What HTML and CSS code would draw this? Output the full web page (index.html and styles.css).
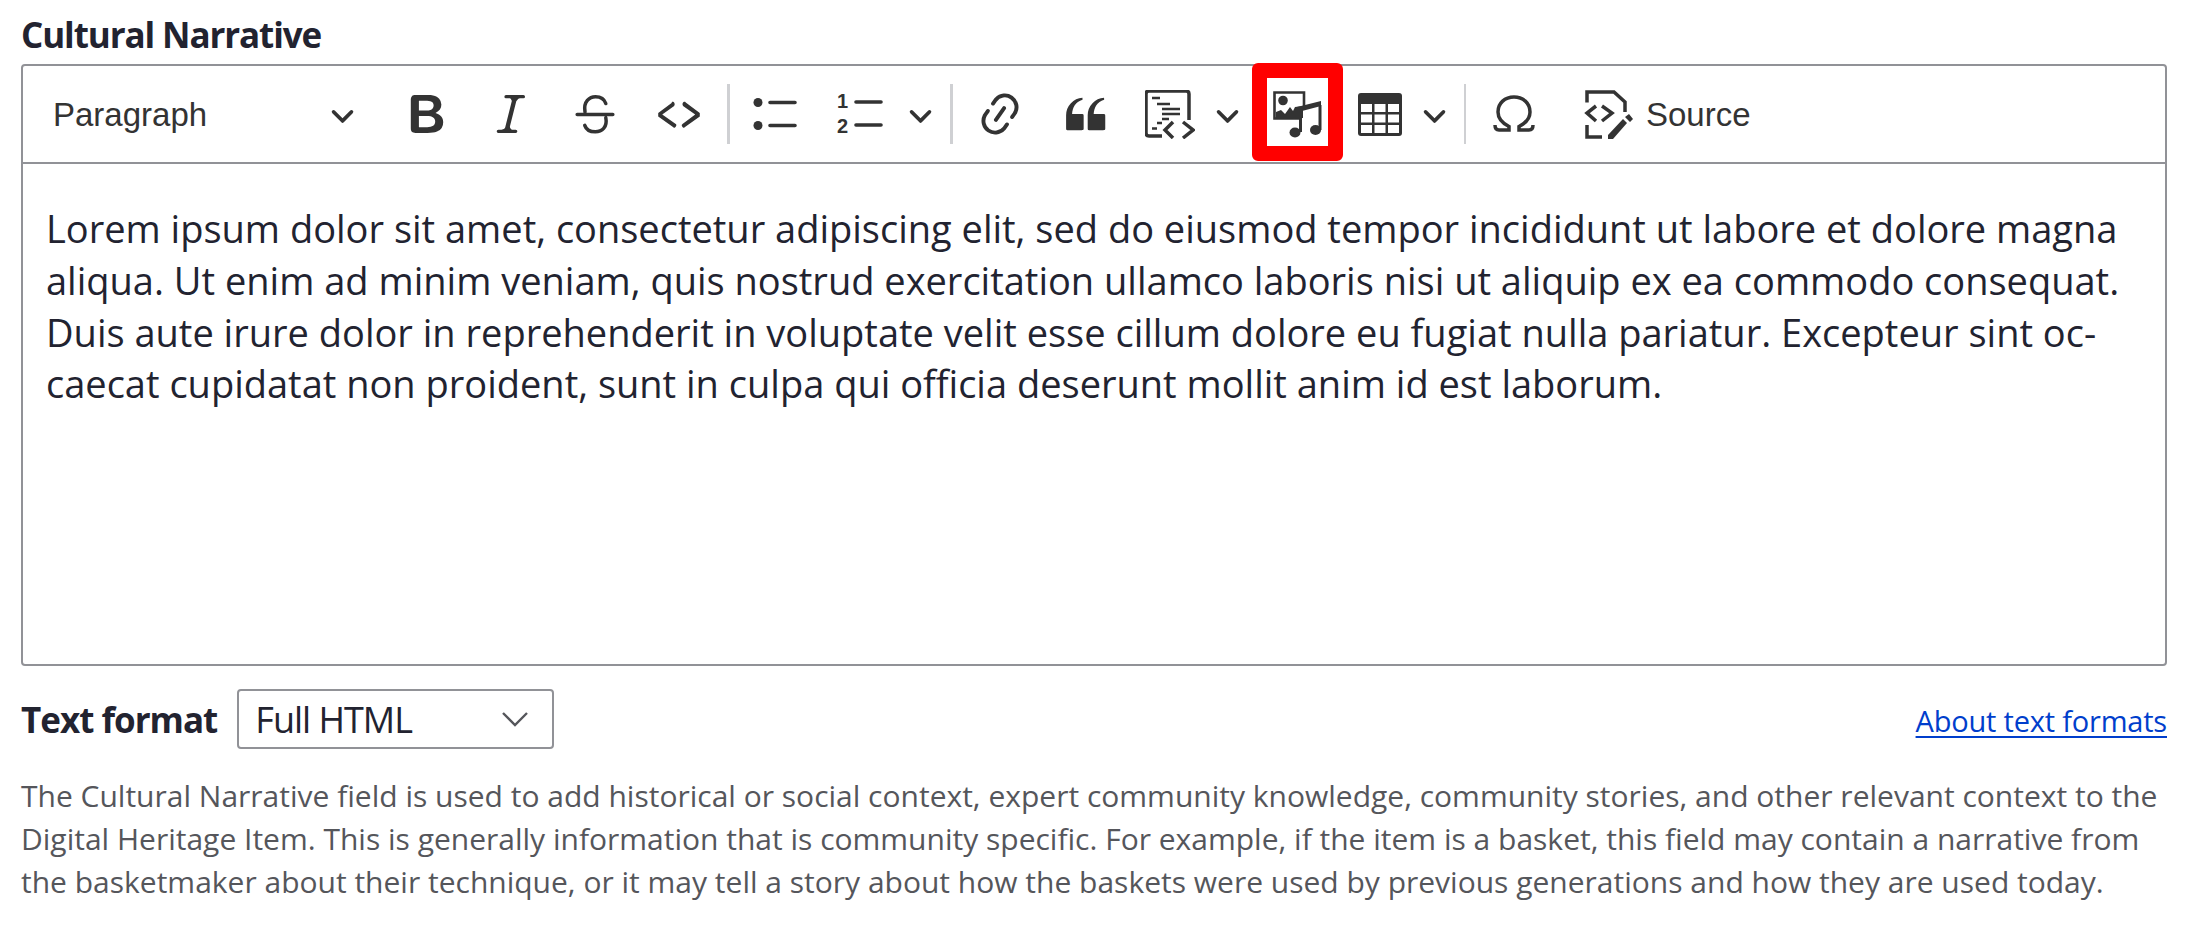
FILE: index.html
```html
<!DOCTYPE html>
<html lang="en">
<head>
<meta charset="utf-8">
<title>Cultural Narrative</title>
<link rel="stylesheet" href="styles.css">
</head>
<body>
<div class="field">
  <label class="field-label">Cultural Narrative</label>
  <div class="editor">
    <div class="toolbar">
      <div class="tool heading"><span class="tool-text">Paragraph</span>
        <svg class="chev" viewBox="0 0 10 10"><path d="M.941 4.523a.75.75 0 1 1 1.06-1.06l3.006 3.005 3.005-3.005a.75.75 0 1 1 1.06 1.06l-3.549 3.55a.75.75 0 0 1-1.168-.136L.941 4.523z"/></svg>
      </div>
      <div class="tool std"><svg class="ico" viewBox="0 0 20 20"><path d="M10.187 17H5.773c-.637 0-1.092-.138-1.364-.415-.273-.277-.409-.718-.409-1.323V4.738c0-.617.14-1.062.419-1.332.279-.27.73-.406 1.354-.406h4.68c.69 0 1.288.041 1.793.124.506.083.96.242 1.36.478.341.197.644.447.906.75a3.262 3.262 0 0 1 .808 2.162c0 1.401-.722 2.426-2.167 3.075C15.05 10.175 16 11.315 16 13.01a3.756 3.756 0 0 1-2.296 3.504 6.1 6.1 0 0 1-1.517.377c-.571.073-1.238.11-2 .11zm-.217-6.217H7v4.087h3.069c1.977 0 2.965-.69 2.965-2.072 0-.707-.256-1.22-.768-1.537-.512-.319-1.277-.478-2.296-.478zM7 5.13v3.619h2.606c.729 0 1.292-.067 1.69-.2a1.6 1.6 0 0 0 .91-.765c.165-.267.247-.566.247-.897 0-.707-.26-1.176-.778-1.409-.519-.232-1.31-.348-2.375-.348H7z"/></svg></div>
      <div class="tool std"><svg class="ico" viewBox="0 0 20 20"><path d="m9.586 14.633.021.004c-.036.335.095.655.393.962.082.083.173.15.274.201h1.474a.6.6 0 1 1 0 1.2H5.304a.6.6 0 0 1 0-1.2h1.15c.474-.07.809-.182 1.005-.334.157-.122.291-.32.404-.597l2.416-9.55a1.053 1.053 0 0 0-.281-.823 1.12 1.12 0 0 0-.442-.296H8.15a.6.6 0 0 1 0-1.2h6.443a.6.6 0 1 1 0 1.2h-1.195c-.376.056-.65.155-.823.296-.215.175-.423.439-.623.79l-2.366 9.347z"/></svg></div>
      <div class="tool std"><svg class="ico line" viewBox="0 0 20 20"><path d="M6.300 9.200C5.600 5.400 8 3.600 10.200 3.600c1.900 0 3.300 1 3.800 2.500M3.400 10.200h13.200M14 11.400c.7 3.600-1.500 5.200-3.900 5.200-1.900 0-3.400-.9-3.900-2.400"/></svg></div>
      <div class="tool std"><svg class="ico" viewBox="0 0 20 20"><path d="m12.500 5.700 5.200 3.900v1.300l-5.600 4c-.1.2-.3.2-.5.2-.3-.1-.6-.7-.6-1l.3-.4 4.700-3.500L11.500 7l-.2-.5c-.1-.3.3-1 .6-1 .3 0 .4 0 .6.2zm-5 0L2.300 9.600v1.300l5.600 4c.1.2.3.2.5.2.3-.1.7-.7.6-1 0-.1 0-.3-.2-.4l-5-3.500L8.200 7l.2-.5c.1-.3-.3-1-.6-1-.3 0-.4 0-.6.2z"/></svg></div>
      <span class="sep sep-a"></span>
      <div class="tool bullets"><svg class="list-ico" viewBox="0 0 44 34"><circle cx="5" cy="5.500" r="4.500"/><circle cx="5" cy="28.500" r="4.500"/><path class="bar" d="M17 5.500h25M17 28.500h25"/></svg></div>
      <div class="tool numbers"><svg class="num-ico" viewBox="0 0 46 46"><text class="digit" x="11" y="17">1</text><text class="digit" x="11" y="42">2</text><path class="bar" d="M19 11h25M19 34h25"/></svg></div>
      <div class="tool arrow"><svg class="chev" viewBox="0 0 10 10"><path d="M.941 4.523a.75.75 0 1 1 1.06-1.06l3.006 3.005 3.005-3.005a.75.75 0 1 1 1.06 1.06l-3.549 3.55a.75.75 0 0 1-1.168-.136L.941 4.523z"/></svg></div>
      <span class="sep sep-b"></span>
      <div class="tool link"><svg class="link-ico" viewBox="0 0 20 20"><path d="m11.077 15 .991-1.416a.75.75 0 1 1 1.229.86l-1.148 1.64a.748.748 0 0 1-.217.206 5.251 5.251 0 0 1-8.503-5.955.741.741 0 0 1 .12-.274l1.147-1.639a.75.75 0 1 1 1.228.86L4.933 10.7l.006.003a3.75 3.75 0 0 0 6.132 4.294l.006.004zm5.494-5.335a.748.748 0 0 1-.12.274l-1.147 1.639a.75.75 0 1 1-1.228-.86l.86-1.23a3.75 3.75 0 0 0-6.144-4.301l-.86 1.229a.75.75 0 0 1-1.229-.86l1.148-1.64a.748.748 0 0 1 .217-.206 5.251 5.251 0 0 1 8.503 5.955zm-4.563-2.532a.75.75 0 0 1 .184 1.045l-3.155 4.505a.75.75 0 1 1-1.229-.86l3.155-4.506a.75.75 0 0 1 1.045-.184z"/></svg></div>
      <div class="tool quote"><svg class="ico" viewBox="0 0 20 20"><path d="M3 10.423a6.500 6.500 0 0 1 6.056-6.408l.038.67C6.448 5.423 5.354 7.663 5.220 10H9c.552 0 .5.432.5.986v4.511c0 .554-.448.503-1 .503h-5c-.552 0-.5-.449-.5-1.003v-4.574zm8 0a6.500 6.500 0 0 1 6.056-6.408l.038.67c-2.646.739-3.740 2.979-3.873 5.315H17c.552 0 .5.432.5.986v4.511c0 .554-.448.503-1 .503h-5c-.552 0-.5-.449-.5-1.003v-4.574z"/></svg></div>
      <div class="tool codeblock"><svg class="block-ico" viewBox="0 0 50 49"><path class="frame" d="M44 30V4q0-3-3-3H4Q1 1 1 4v39q0 3 3 3h13"/><path class="rows" d="M7 8h8M12 14h13M17 19h18M17 24h18M17 29h7M12 33h5M7 38.500h5"/><path class="frame" d="M28 32l-8 8 8 8M38 32l10 8-10 8"/></svg></div>
      <div class="tool arrow-narrow"><svg class="chev" viewBox="0 0 10 10"><path d="M.941 4.523a.75.75 0 1 1 1.06-1.06l3.006 3.005 3.005-3.005a.75.75 0 1 1 1.06 1.06l-3.549 3.55a.75.75 0 0 1-1.168-.136L.941 4.523z"/></svg></div>
      <div class="tool media">
        <svg class="media-ico" viewBox="0 0 49 47"><path class="media-frame" d="M31 15V1.500H1.500v26H27"/><circle cx="10" cy="9.500" r="4.800"/><path d="M3 21l5-2 4 4 5-7 3 4 2-4 8-1v12l-27 1z"/><path d="M24 16L48 10v5L29 20v21h-3V19z"/><path d="M45.500 14h3v25h-3z"/><ellipse cx="22" cy="41.500" rx="5.500" ry="5"/><ellipse cx="42.500" cy="39" rx="5.500" ry="5"/></svg>
        <span class="highlight"></span>
      </div>
      <div class="tool table"><svg class="table-ico" viewBox="0 0 44 43"><rect width="44" height="43" rx="3"/><path class="cell" d="M3 11h11v8H3zM16.500 11h11v8h-11zM30 11h11v8H30zM3 21.500h11v8H3zM16.500 21.500h11v8h-11zM30 21.500h11v8H30zM3 32h11v8H3zM16.500 32h11v8h-11zM30 32h11v8H30z"/></svg></div>
      <div class="tool arrow-wide"><svg class="chev" viewBox="0 0 10 10"><path d="M.941 4.523a.75.75 0 1 1 1.06-1.06l3.006 3.005 3.005-3.005a.75.75 0 1 1 1.06 1.06l-3.549 3.55a.75.75 0 0 1-1.168-.136L.941 4.523z"/></svg></div>
      <span class="sep sep-c"></span>
      <div class="tool omega"><svg class="omega-ico" viewBox="0 0 42 38"><path class="frame" d="M2 30q0 5 4 5h10v-3.500C8 27.500 5 23 5 17 5 8 12 2 21 2s16 6 16 15c0 6-3 10.500-11 14.500V35h10q4 0 4-5"/></svg></div>
      <div class="tool source">
        <svg class="source-ico" viewBox="0 0 49 49"><path class="frame" d="M3 12.500V2h27l11 10v10M3 35v12h15M12 16l-9 7 9 8M18 16l10 7-10 8"/><path d="M39 29l4 4-14 16h-5v-4zM45 24l4 5-3 3-5-5z"/></svg>
        <span class="tool-text">Source</span>
      </div>
    </div>
    <div class="content">Lorem ipsum dolor sit amet, consectetur adipiscing elit, sed do eiusmod tempor incididunt ut labore et dolore magna<br>aliqua. Ut enim ad minim veniam, quis nostrud exercitation ullamco laboris nisi ut aliquip ex ea commodo consequat.<br>Duis aute irure dolor in reprehenderit in voluptate velit esse cillum dolore eu fugiat nulla pariatur. Excepteur sint oc-<br>caecat cupidatat non proident, sunt in culpa qui officia deserunt mollit anim id est laborum.</div>
  </div>
  <div class="format-row">
    <span class="format-label">Text format</span>
    <div class="select"><span>Full HTML</span>
      <svg class="select-arrow" viewBox="0 0 28 16"><path d="M2 2l12 12L26 2"/></svg>
    </div>
    <a class="about" href="#">About text formats</a>
  </div>
  <p class="help">The Cultural Narrative field is used to add historical or social context, expert community knowledge, community stories, and other relevant context to the<br>Digital Heritage Item. This is generally information that is community specific. For example, if the item is a basket, this field may contain a narrative from<br>the basketmaker about their technique, or it may tell a story about how the baskets were used by previous generations and how they are used today.</p>
</div>
</body>
</html>
```
FILE: styles.css
```css
html, body { margin: 0; background: #fff; }
body { font-family: "Open Sans", "Noto Sans", sans-serif; color: #222330; }
.field { padding: 0 31px 0 21px; }
.field-label { display: block; font-size: 35px; font-weight: 700; line-height: 44px; padding-top: 13px; letter-spacing: -1.1px; }
.editor { margin-top: 7px; height: 598px; border: 2px solid #919297; border-radius: 4px; }
.toolbar { display: flex; align-items: center; height: 96px; border-bottom: 2px solid #919297; color: #333; fill: #333; font-family: "Liberation Sans", Arial, sans-serif; font-size: 33px; }
.tool { display: flex; align-items: center; justify-content: center; height: 96px; flex: none; }
.tool-text { white-space: nowrap; padding-top: 2px; }
.heading { width: 362px; justify-content: flex-start; padding-left: 30px; box-sizing: border-box; }
.heading .chev { margin-left: 123px; }
.std { width: 84px; }
.sep { flex: none; width: 3px; height: 60px; background: #cfd0d3; }
.sep-a { margin-left: 6px; }
.sep-b { margin-left: 10px; }
.sep-c { width: 2px; }
.bullets { width: 90px; }
.numbers { width: 80px; }
.arrow { width: 40px; }
.link { width: 94px; }
.quote { width: 76px; }
.codeblock { width: 93px; }
.arrow-narrow { width: 22px; }
.media { width: 118px; position: relative; }
.table { width: 48px; }
.arrow-wide { width: 60px; }
.omega { width: 96px; }
.source { margin-left: 22px; gap: 13px; }
.ico { width: 54px; height: 54px; }
.link-ico { width: 52px; height: 52px; }
.line { fill: none; stroke: #333; stroke-width: 1.3; stroke-linecap: round; }
.chev { width: 25px; height: 25px; flex: none; }
.list-ico { width: 44px; height: 34px; }
.num-ico { width: 46px; height: 46px; }
.bar { fill: none; stroke: #333; stroke-width: 3.6; stroke-linecap: round; }
.digit { font-family: "Liberation Sans", Arial, sans-serif; font-size: 20px; font-weight: 700; text-anchor: end; }
.block-ico { width: 50px; height: 49px; }
.frame { fill: none; stroke: #333; stroke-width: 3.5; }
.rows { fill: none; stroke: #333; stroke-width: 2.4; }
.media-ico { width: 49px; height: 47px; }
.media-frame { fill: none; stroke: #333; stroke-width: 2.600; }
.highlight { position: absolute; left: 14px; top: -3px; box-sizing: border-box; width: 91px; height: 98px; border: 15px solid #f00; border-radius: 6px; }
.table-ico { width: 44px; height: 43px; }
.cell { fill: #fff; }
.omega-ico { width: 42px; height: 38px; }
.source-ico { width: 49px; height: 49px; }
.content { padding: 39px 0 0 23px; font-size: 38px; line-height: 51.8px; white-space: nowrap; color: #222330; }
.format-row { display: flex; align-items: center; height: 60px; margin-top: 23px; }
.format-label { font-size: 35px; font-weight: 700; letter-spacing: -1px; }
.select { display: flex; align-items: center; justify-content: space-between; box-sizing: border-box; width: 317px; height: 60px; margin-left: 20px; padding: 0 23px 0 16px; border: 2px solid #919297; border-radius: 4px; font-size: 36px; letter-spacing: -1px; }
.select-arrow { width: 28px; height: 16px; fill: none; stroke: #55565b; stroke-width: 2.4; }
.about { margin-left: auto; padding-top: 2px; color: #003ecc; font-size: 29px; letter-spacing: -0.2px; text-underline-offset: 4px; }
.help { margin: 25px 0 0; font-size: 30px; line-height: 43px; color: #55565b; white-space: nowrap; }
```
